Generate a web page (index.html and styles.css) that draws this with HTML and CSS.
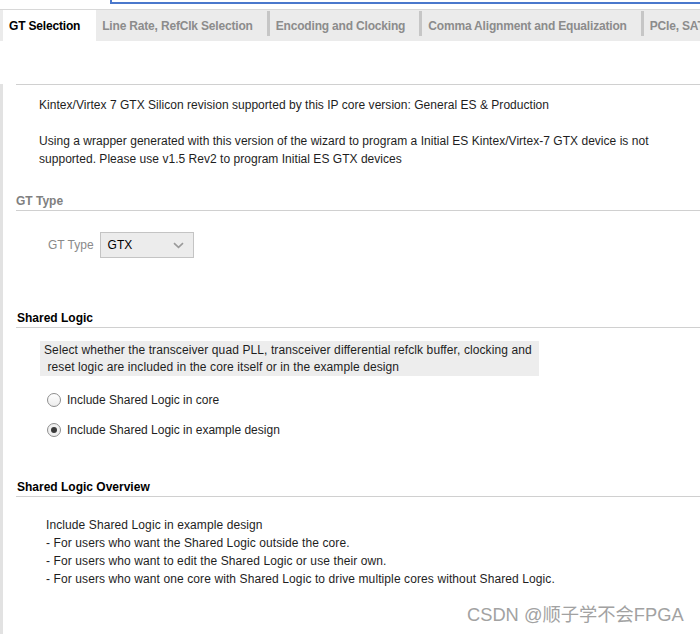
FILE: index.html
```html
<!DOCTYPE html>
<html>
<head>
<meta charset="utf-8">
<link rel="stylesheet" href="styles.css">
</head>
<body>
<div class="topstrip"><div class="bluebox"></div></div>
<div class="tabbar">
  <div class="tab active">GT Selection</div>
  <div class="tab">Line Rate, RefClk Selection</div>
  <div class="sep"></div>
  <div class="tab">Encoding and Clocking</div>
  <div class="sep"></div>
  <div class="tab">Comma Alignment and Equalization</div>
  <div class="sep"></div>
  <div class="tab last">PCIe, SATA</div>
</div>
<div class="panel">
  <div class="rule"></div>
  <p class="info first">Kintex/Virtex 7 GTX Silicon revision supported by this IP core version: General ES &amp; Production</p>
  <p class="info second">Using a wrapper generated with this version of the wizard to program a Initial ES Kintex/Virtex-7 GTX device is not<br>supported. Please use v1.5 Rev2 to program Initial ES GTX devices</p>

  <div class="section-head muted gt-head">GT Type</div>
  <div class="field-row">
    <span class="field-label">GT Type</span>
    <div class="select">
      <span>GTX</span>
      <svg class="chev" width="11" height="7" viewBox="0 0 11 7"><path d="M1 1.2 L5.5 5.4 L10 1.2" fill="none" stroke="#9a9a9a" stroke-width="1.6"/></svg>
    </div>
  </div>

  <div class="section-head shared-head">Shared Logic</div>
  <div class="note">Select whether the transceiver quad PLL, transceiver differential refclk buffer, clocking and<br>&nbsp;reset logic are included in the core itself or in the example design</div>
  <div class="radio-row r1"><span class="radio"></span><span>Include Shared Logic in core</span></div>
  <div class="radio-row r2"><span class="radio checked"></span><span>Include Shared Logic in example design</span></div>

  <div class="section-head overview-head">Shared Logic Overview</div>
  <div class="overview">
    <div>Include Shared Logic in example design</div>
    <div>- For users who want the Shared Logic outside the core.</div>
    <div>- For users who want to edit the Shared Logic or use their own.</div>
    <div>- For users who want one core with Shared Logic to drive multiple cores without Shared Logic.</div>
  </div>
</div>
<div class="watermark">CSDN @顺子学不会FPGA</div>
</body>
</html>
```
FILE: styles.css
```css
html, body {
  margin: 0;
  padding: 0;
  background: #ffffff;
  width: 700px;
  height: 634px;
  overflow: hidden;
  font-family: "Liberation Sans", Arial, sans-serif;
  font-size: 12px;
  color: #1e1e1e;
  position: relative;
}
.topstrip {
  height: 10px;
  border-bottom: 1px solid #d8d8d8;
  box-sizing: border-box;
}
.bluebox {
  margin-left: 110px;
  height: 4px;
  border-left: 2px solid #4a78cc;
  border-bottom: 2px solid #4a78cc;
  box-sizing: border-box;
}
.tabbar {
  display: flex;
  align-items: flex-start;
  height: 31px;
  background: #ebebeb;
  white-space: nowrap;
  overflow: hidden;
}
.tab {
  height: 31px;
  line-height: 32px;
  font-weight: bold;
  color: #8c8c8c;
  padding: 0 14px 0 6px;
  letter-spacing: -0.18px;
  flex: none;
}
.tab.active {
  background: #ffffff;
  color: #000000;
  margin-left: 3px;
  padding: 0 16px 0 6px;
}
.tab.last { padding-right: 0; }
.sep {
  width: 3px;
  height: 25px;
  background: #c6c6c6;
  flex: none;
  margin-top: 1px;
}
.panel {
  border-left: 3px solid #e2e2e2;
  padding-left: 13px;
  height: 593px;
  box-sizing: border-box;
}
.rule {
  height: 1px;
  background: #d0d0d0;
  margin-top: 43px;
}
.info {
  margin: 0;
  line-height: 18px;
  padding-left: 23px;
  letter-spacing: 0.03px;
}
.info.first { margin-top: 11px; }
.info.second { margin-top: 18px; }
.section-head {
  font-weight: bold;
  line-height: 18px;
  border-bottom: 1px solid #d0d0d0;
  color: #000;
  padding-left: 1px;
}
.section-head.muted { color: #808080; padding-left: 0; }
.gt-head { margin-top: 24px; }
.field-row {
  display: flex;
  align-items: center;
  margin-top: 21px;
  padding-left: 32px;
  gap: 6px;
}
.field-label { color: #8a8a8a; }
.select {
  width: 94px;
  height: 26px;
  box-sizing: border-box;
  border: 1px solid #c4c4c4;
  background: #ececec;
  display: flex;
  align-items: center;
  justify-content: space-between;
  padding: 0 9px 0 7px;
  color: #000;
}
.chev { margin-top: 1px; }
.shared-head { margin-top: 51px; }
.note {
  margin-top: 13px;
  margin-left: 24px;
  width: 499px;
  height: 35px;
  box-sizing: border-box;
  background: #ededed;
  padding: 1px 0 0 4px;
  line-height: 17px;
  letter-spacing: 0.1px;
}
.radio-row {
  display: flex;
  align-items: center;
  height: 18px;
  padding-left: 31px;
  gap: 6px;
}
.r1 { margin-top: 15px; }
.r2 { margin-top: 12px; }
.radio {
  width: 14px;
  height: 14px;
  box-sizing: border-box;
  border-radius: 50%;
  border: 1px solid #8e8e8e;
  background: linear-gradient(#ffffff, #ececec);
  position: relative;
  flex: none;
}
.radio.checked {
  background: #f0f0f0;
}
.radio.checked::after {
  content: "";
  position: absolute;
  left: 3px;
  top: 3px;
  width: 6px;
  height: 6px;
  border-radius: 50%;
  background: #3a3a3a;
}
.overview-head { margin-top: 39px; }
.overview {
  margin-top: 19px;
  padding-left: 30px;
  line-height: 18px;
  letter-spacing: 0.1px;
}
.watermark {
  position: absolute;
  left: 467px;
  top: 603px;
  font-size: 18.3px;
  line-height: 24px;
  color: #a2a2a2;
  font-family: "Liberation Sans", "Noto Sans CJK SC", sans-serif;
  white-space: nowrap;
}
```
